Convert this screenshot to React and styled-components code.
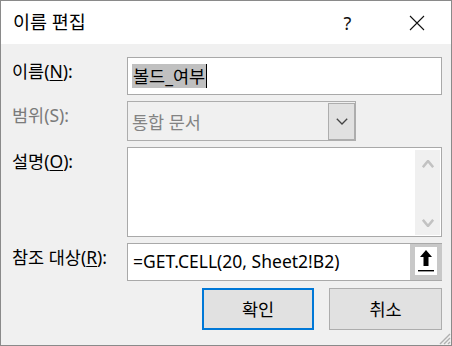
import React from "react";
import styled, { createGlobalStyle } from "styled-components";

const GlobalStyle = createGlobalStyle`
  html, body { margin: 0; padding: 0; background: #f0f0f0; }
  * { box-sizing: border-box; }
`;

const FONT = `"Noto Sans", "Noto Sans CJK KR", sans-serif`;

const Window = styled.div`
  position: relative;
  width: 452px;
  height: 346px;
  border: 1px solid #8a8a8a;
  display: flex;
  flex-direction: column;
  background: #f0f0f0;
  font-family: ${FONT};
  color: #000;
  overflow: hidden;
`;

const TitleBar = styled.div`
  height: 43px;
  flex: none;
  background: #fff;
  display: flex;
  align-items: center;
`;

const Title = styled.div`
  flex: 1;
  padding-left: 12px;
  font-size: 18.5px;
  line-height: 24px;
  padding-bottom: 1px;
`;

const CaptionButton = styled.div`
  width: 69px;
  height: 43px;
  display: flex;
  align-items: center;
  justify-content: center;
  font-size: 18px;
  color: #111;
`;

const Body = styled.div`
  flex: 1;
  padding: 13px 9px 0 11px;
  display: grid;
  grid-template-columns: 115px 315px;
  grid-template-rows: 38px 40px 90px 38px 42px;
  row-gap: 6px;
`;

const Label = styled.div`
  font-size: 17.5px;
  line-height: 24px;
  padding-top: 2px;
  color: ${(p) => (p.$disabled ? "#7a7a7a" : "#000")};
  white-space: nowrap;
`;

const Mn = styled.span`
  text-decoration: underline;
  text-underline-offset: 2px;
  text-decoration-thickness: 1px;
`;

const TextBox = styled.div`
  border: 1px solid #a9a9a9;
  background: #fff;
  display: flex;
  align-items: center;
  padding-left: 4px;
  font-size: 17.5px;
  white-space: nowrap;
`;

const Selected = styled.span`
  background: #c0c0c0;
  line-height: 24px;
  padding: 0 1px;
  border-right: 1px solid #000;
`;

const Combo = styled.div`
  width: 229px;
  border: 1px solid #adadad;
  background: #f0f0f0;
  padding: 1px 0 0 4px;
  display: flex;
  align-items: stretch;
`;

const ComboText = styled.div`
  flex: 1;
  display: flex;
  align-items: center;
  font-size: 17.5px;
  color: #838383;
  padding-bottom: 1px;
`;

const DropButton = styled.div`
  width: 27px;
  border: 1px solid #adadad;
  background: #e1e1e1;
  display: flex;
  align-items: center;
  justify-content: center;
`;

const TextArea = styled.div`
  border: 1px solid #a9a9a9;
  background: #fff;
  display: flex;
  justify-content: flex-end;
  padding: 2px 1px 1px 0;
`;

const ScrollBar = styled.div`
  width: 25px;
  background: #f0f0f0;
  display: flex;
  flex-direction: column;
  justify-content: space-between;
  align-items: center;
  padding: 10px 0 8px;
`;

const RefBox = styled(TextBox)`
  padding: 0 0 0 5px;
  align-items: stretch;
`;

const RefText = styled.div`
  flex: 1;
  display: flex;
  align-items: center;
  padding-bottom: 2px;
`;

const RangeButton = styled.div`
  width: 32px;
  border: 5px solid #c8c8c8;
  border-top-width: 3px;
  border-bottom-width: 5px;
  margin: 0 -1px 0 0;
  background: #fff;
  display: flex;
  align-items: center;
  justify-content: center;
`;

const ButtonRow = styled.div`
  grid-column: 1 / span 2;
  display: flex;
  justify-content: flex-end;
  gap: 15px;
  padding-top: 1px;
`;

const Button = styled.div`
  width: ${(p) => (p.$default ? "112px" : "113px")};
  height: 42px;
  background: #e1e1e1;
  border: ${(p) => (p.$default ? "2px solid #0078d7" : "1px solid #adadad")};
  display: flex;
  align-items: center;
  justify-content: center;
  font-size: 17.5px;
  padding-bottom: 1px;
`;

const Grip = styled.svg`
  position: absolute;
  right: 0;
  bottom: 0;
`;

const Chevron = ({ up, color, w = 12, h = 7, sw = 1.2 }) => (
  <svg width={w} height={h} viewBox={`0 0 ${w} ${h}`}>
    <polyline
      points={
        up
          ? `0.8,${h - 0.8} ${w / 2},1 ${w - 0.8},${h - 0.8}`
          : `0.8,0.8 ${w / 2},${h - 1} ${w - 0.8},0.8`
      }
      fill="none"
      stroke={color}
      strokeWidth={sw}
    />
  </svg>
);

export default function App() {
  return (
    <>
      <GlobalStyle />
      <Window>
        <TitleBar>
          <Title>이름 편집</Title>
          <CaptionButton>?</CaptionButton>
          <CaptionButton>
            <svg width="16" height="16" viewBox="0 0 16 16">
              <path d="M1 1 L15 15 M15 1 L1 15" stroke="#111" strokeWidth="1.1" fill="none" />
            </svg>
          </CaptionButton>
        </TitleBar>
        <Body>
          <Label>
            이름(<Mn>N</Mn>):
          </Label>
          <TextBox>
            <Selected>볼드_여부</Selected>
          </TextBox>

          <Label $disabled>범위(S):</Label>
          <Combo>
            <ComboText>통합 문서</ComboText>
            <DropButton>
              <Chevron color="#444" w={12} h={7} sw={1.3} />
            </DropButton>
          </Combo>

          <Label>
            설명(<Mn>O</Mn>):
          </Label>
          <TextArea>
            <ScrollBar>
              <Chevron up color="#c2c2c2" w={12} h={8} sw={2.6} />
              <Chevron color="#c2c2c2" w={12} h={8} sw={2.6} />
            </ScrollBar>
          </TextArea>

          <Label>
            참조 대상(<Mn>R</Mn>):
          </Label>
          <RefBox>
            <RefText>=GET.CELL(20, Sheet2!B2)</RefText>
            <RangeButton>
              <svg width="18" height="26" viewBox="0 0 18 26">
                <path d="M9 2 L15 9 L11.5 9 L11.5 18 L6.5 18 L6.5 9 L3 9 Z" fill="#000" />
                <rect x="1" y="22" width="16" height="1.4" fill="#000" />
              </svg>
            </RangeButton>
          </RefBox>

          <ButtonRow>
            <Button $default>확인</Button>
            <Button>취소</Button>
          </ButtonRow>
        </Body>
        <Grip width="14" height="14" viewBox="0 0 14 14">
          <path d="M13 3 L3 13 M13 7 L7 13 M13 11 L11 13" stroke="#b0b0b0" strokeWidth="1.4" />
        </Grip>
      </Window>
    </>
  );
}
